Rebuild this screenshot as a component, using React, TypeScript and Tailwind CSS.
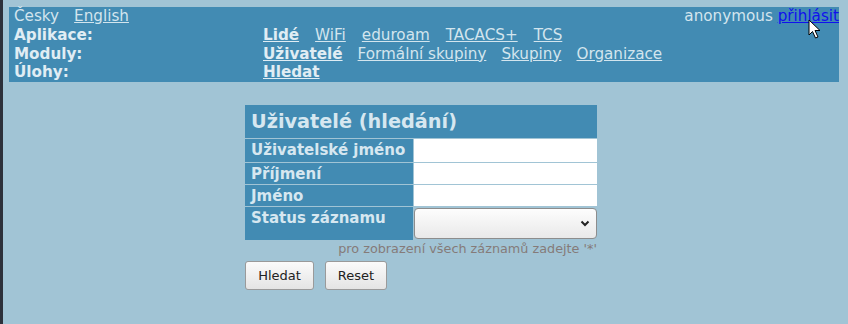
const nav = {
  apps: ["WiFi", "eduroam", "TACACS+", "TCS"],
  modules: ["Formální skupiny", "Skupiny", "Organizace"],
};

function Cursor() {
  return (
    <svg
      className="absolute left-[805px] top-[19px]"
      width="14"
      height="21"
      viewBox="0 0 14 21"
    >
      <path
        d="M1 1 L1 16 L4.5 12.5 L7.5 19 L10 18 L7 11.5 L12 11.5 Z"
        fill="#fff"
        stroke="#000"
        strokeWidth="1"
        strokeLinejoin="round"
      />
    </svg>
  );
}

function Row({ label, h }: { label: string; h: string }) {
  return (
    <>
      <div
        className={`overflow-hidden bg-[#428bb3] px-[6px] text-[15px] font-bold leading-[22px] text-[#d6e7f0] ${h}`}
      >
        {label}
      </div>
      <div className={`overflow-hidden bg-white ${h}`}>
        <input className="block h-full w-full outline-none" />
      </div>
    </>
  );
}

export default function App() {
  return (
    <div className="relative min-h-[324px] border-l-[3px] border-[#2d313b] bg-[#a1c4d5] pl-[6px] pr-[9px] pt-[7px] font-['DejaVu_Sans',sans-serif]">
      <div className="bg-[#428bb3] pl-[5px] text-[15.2px] leading-[18.75px] text-[#d3e5ee]">
        <div className="flex justify-between">
          <div className="flex gap-[15px]">
            <span>Česky</span>
            <a className="underline">English</a>
          </div>
          <div>
            anonymous <a className="text-[#1010ee] underline">přihlásit</a>
          </div>
        </div>
        <div className="grid grid-cols-[249px_1fr]">
          <div className="font-bold text-[#e0edf4]">Aplikace:</div>
          <div className="flex gap-[16px]">
            <a className="font-bold text-[#e0edf4] underline">Lidé</a>
            {nav.apps.map((n) => (
              <a key={n} className="underline">
                {n}
              </a>
            ))}
          </div>
          <div className="font-bold text-[#e0edf4]">Moduly:</div>
          <div className="flex gap-[15px]">
            <a className="font-bold text-[#e0edf4] underline">Uživatelé</a>
            {nav.modules.map((n) => (
              <a key={n} className="underline">
                {n}
              </a>
            ))}
          </div>
          <div className="font-bold text-[#e0edf4]">Úlohy:</div>
          <div>
            <a className="font-bold text-[#e0edf4] underline">Hledat</a>
          </div>
        </div>
      </div>

      <div className="ml-[236px] mt-[23px] w-[352px]">
        <div className="grid grid-cols-[168px_183px] gap-px">
          <div className="col-span-2 h-[33px] bg-[#428bb3] px-[6px] text-[19.3px] font-bold leading-[33px] text-[#d6e7f0]">
            Uživatelé (hledání)
          </div>
          <Row label="Uživatelské jméno" h="h-[23px]" />
          <Row label="Příjmení" h="h-[21px]" />
          <Row label="Jméno" h="h-[21px]" />
          <div className="h-[33px] bg-[#428bb3] px-[6px] text-[15px] font-bold leading-[22px] text-[#d6e7f0]">
            Status záznamu
          </div>
          <div className="h-[33px] bg-[#a1c4d5] pt-px">
            <div className="flex h-[31px] items-center justify-end rounded-[4px] border border-[#8d8d8d] bg-gradient-to-b from-[#fdfdfd] to-[#e9e9e9] pr-[6px]">
              <svg width="10" height="7" viewBox="0 0 10 7">
                <path d="M1.5 1.5 L5 5 L8.5 1.5" fill="none" stroke="#222" strokeWidth="2" />
              </svg>
            </div>
          </div>
        </div>
        <div className="mt-px text-right text-[12.8px] leading-[15px] text-[#857b79]">
          pro zobrazení všech záznamů zadejte '*'
        </div>
        <div className="mt-[5px] flex gap-[11px] text-[13px] font-normal text-[#222]">
          <button className="h-[29px] w-[69px] rounded-[3px] border border-[#9a9a9a] bg-gradient-to-b from-[#fbfbfb] to-[#e4e4e4]">
            Hledat
          </button>
          <button className="h-[29px] w-[62px] rounded-[3px] border border-[#9a9a9a] bg-gradient-to-b from-[#fbfbfb] to-[#e4e4e4]">
            Reset
          </button>
        </div>
      </div>
      <Cursor />
    </div>
  );
}
